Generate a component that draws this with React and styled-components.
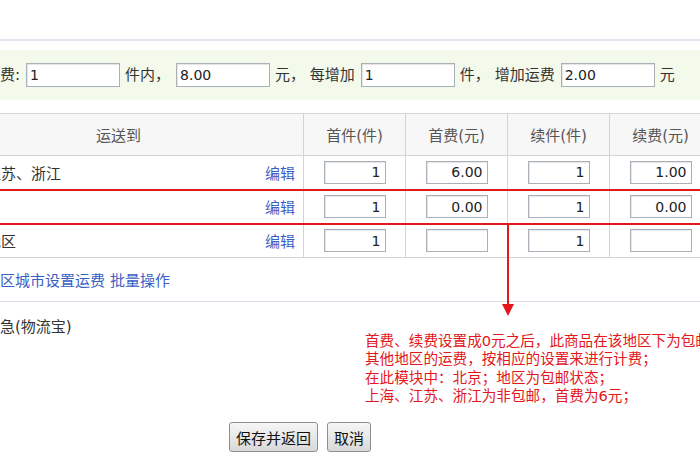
import React from 'react';
import styled, { createGlobalStyle } from 'styled-components';

const GlobalStyle = createGlobalStyle`
  html, body {
    margin: 0;
    padding: 0;
    background: #fff;
    overflow: hidden;
  }
  body {
    font-family: "DejaVu Sans", "Noto Sans CJK SC", sans-serif;
    font-size: 15px;
    color: #333;
  }
`;

// the screenshot is scrolled sideways, so the page starts left of the window
const Page = styled.div`
  position: relative;
  width: 800px;
  height: 470px;
  margin-left: -67px;
`;

const TopBar = styled.div`
  height: 39px;
  border-bottom: 2px solid #e1e6ee;
`;

const FeeBand = styled.div`
  display: flex;
  align-items: center;
  height: 50px;
  margin-top: 9px;
  padding-left: 22px;
  background: #f3faec;
  white-space: pre;
`;

const Label = styled.span`
  line-height: 24px;
`;

const FeeInput = styled.input`
  box-sizing: border-box;
  width: 94px;
  height: 24px;
  margin: 0 5px 0 6px;
  padding: 0 3px;
  border: 1px solid #a9b0b8;
  box-shadow: inset 1px 1px 1px #e4e4e4;
  font-family: "DejaVu Sans", sans-serif;
  font-size: 14px;
  color: #222;
  outline: none;
`;

const Table = styled.table`
  margin-top: 13px;
  border-collapse: collapse;
  table-layout: fixed;
  width: 778px;
`;

const HeadCell = styled.th`
  height: 41px;
  padding: 0;
  border: 1px solid #d4d4d4;
  background: #f7f7f7;
  color: #555;
  font-weight: normal;
  text-align: center;
`;

const Row = styled.tr`
  height: 34px;
  ${p => p.$marked && `
    border-top: 2px solid #e3171c;
    border-bottom: 2px solid #e3171c;
  `}
`;

const Cell = styled.td`
  padding: 0;
  border: 1px solid #d4d4d4;
  text-align: center;
`;

const AreaCell = styled.div`
  display: flex;
  justify-content: space-between;
  align-items: center;
  padding: 0 8px 0 7px;
`;

const Link = styled.a`
  color: #3a5fc4;
  text-decoration: none;
  cursor: pointer;
`;

const NumInput = styled.input`
  box-sizing: border-box;
  width: 62px;
  height: 23px;
  padding: 0 4px;
  border: 1px solid #a9b0b8;
  box-shadow: inset 1px 1px 1px #e6e6e6;
  font-family: "DejaVu Sans", sans-serif;
  font-size: 14px;
  color: #222;
  text-align: right;
  outline: none;
`;

const LinkRow = styled.div`
  display: flex;
  align-items: center;
  gap: 5px;
  height: 43px;
  padding-left: 7px;
  border-bottom: 1px solid #d3dce8;
`;

const Lower = styled.div`
  display: grid;
  grid-template-columns: 410px 1fr;
  padding-left: 22px;
`;

const Service = styled.div`
  padding-top: 16px;
  line-height: 18px;
`;

const Note = styled.div`
  padding-top: 30px;
  color: #e3171c;
  font-size: 14.6px;
  line-height: 18.3px;
  white-space: nowrap;
`;

const Buttons = styled.div`
  display: flex;
  gap: 9px;
  margin-top: 17px;
  padding-left: 296px;
`;

const Button = styled.button`
  height: 30px;
  padding: 0 6px;
  border: 1px solid #8f8f8f;
  border-radius: 3px;
  background: linear-gradient(#f6f6f6, #d9d9d9);
  font-family: "Noto Sans CJK SC", sans-serif;
  font-size: 15px;
  color: #111;
  cursor: pointer;
`;

const Arrow = styled.svg`
  position: absolute;
  left: 568px;
  top: 225px;
`;

const rows = [
  { area: '上海、江苏、浙江', first: '1', fee: '6.00', next: '1', nextFee: '1.00' },
  { area: '北京', first: '1', fee: '0.00', next: '1', nextFee: '0.00', marked: true },
  { area: '未添加地区', first: '1', fee: '', next: '1', nextFee: '' },
];

export default function App() {
  return (
    <>
      <GlobalStyle />
      <Page>
        <TopBar />
        <FeeBand>
          <Label>默认运费:</Label>
          <FeeInput defaultValue="1" />
          <Label>件内，</Label>
          <FeeInput defaultValue="8.00" />
          <Label>元， 每增加</Label>
          <FeeInput defaultValue="1" />
          <Label>件， 增加运费</Label>
          <FeeInput defaultValue="2.00" />
          <Label>元</Label>
        </FeeBand>

        <Table>
          <colgroup>
            <col style={{ width: 370 }} />
            <col style={{ width: 102 }} />
            <col style={{ width: 102 }} />
            <col style={{ width: 102 }} />
            <col style={{ width: 102 }} />
          </colgroup>
          <thead>
            <tr>
              <HeadCell>运送到</HeadCell>
              <HeadCell>首件(件)</HeadCell>
              <HeadCell>首费(元)</HeadCell>
              <HeadCell>续件(件)</HeadCell>
              <HeadCell>续费(元)</HeadCell>
            </tr>
          </thead>
          <tbody>
            {rows.map((r, i) => (
              <Row key={i} $marked={r.marked}>
                <Cell>
                  <AreaCell>
                    <span>{r.area}</span>
                    <Link>编辑</Link>
                  </AreaCell>
                </Cell>
                <Cell><NumInput defaultValue={r.first} /></Cell>
                <Cell><NumInput defaultValue={r.fee} /></Cell>
                <Cell><NumInput defaultValue={r.next} /></Cell>
                <Cell><NumInput defaultValue={r.nextFee} /></Cell>
              </Row>
            ))}
          </tbody>
        </Table>

        <LinkRow>
          <Link>为指定地区城市设置运费</Link>
          <Link>批量操作</Link>
        </LinkRow>

        <Lower>
          <Service>是否加急(物流宝)</Service>
          <Note>
            <div>首费、续费设置成0元之后，此商品在该地区下为包邮；</div>
            <div>其他地区的运费，按相应的设置来进行计费；</div>
            <div>在此模块中：北京；地区为包邮状态；</div>
            <div>上海、江苏、浙江为非包邮，首费为6元；</div>
          </Note>
        </Lower>

        <Buttons>
          <Button>保存并返回</Button>
          <Button>取消</Button>
        </Buttons>

        <Arrow width="14" height="92" viewBox="0 0 14 92">
          <line x1="7" y1="0" x2="7" y2="80" stroke="#e3171c" strokeWidth="2" />
          <polygon points="1,79 13,79 7,91" fill="#e3171c" />
        </Arrow>
      </Page>
    </>
  );
}
